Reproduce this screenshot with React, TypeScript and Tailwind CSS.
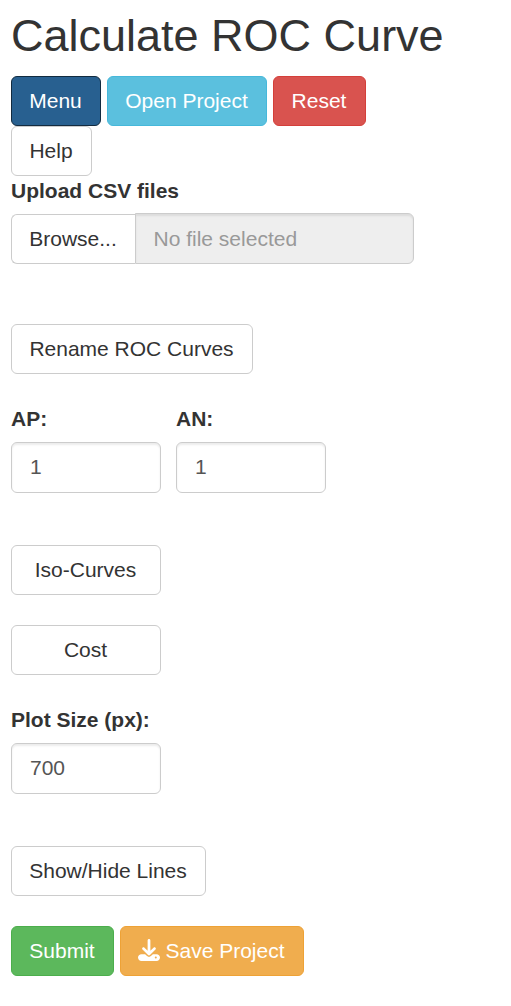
import React from "react";

const base =
  "flex h-[50px] items-center justify-center rounded-md border pr-px pb-[2px] text-[21px] leading-none whitespace-nowrap";
const plain = "bg-white border-[#ccc] text-[#333]";

function Button({ className, children }: { className: string; children: React.ReactNode }) {
  return <button className={`${base} ${className}`}>{children}</button>;
}

function NumberField({ label, value }: { label: string; value: string }) {
  return (
    <div className="w-[150px]">
      <label className="block h-[38px] whitespace-nowrap text-[21px] leading-[29px] font-bold">{label}</label>
      <input
        defaultValue={value}
        className="block h-[51px] w-full rounded-md border border-[#ccc] bg-white px-[18px] pb-0.5 text-[21px] text-[#555] shadow-[inset_0_2px_2px_rgba(0,0,0,0.075)] outline-none"
      />
    </div>
  );
}

function DownloadIcon() {
  return (
    <svg viewBox="0 0 512 512" className="mr-[5px] size-[22px] shrink-0" fill="currentColor">
      <path d="M288 32c0-17.700-14.300-32-32-32s-32 14.300-32 32v242.700l-73.400-73.400c-12.500-12.500-32.800-12.500-45.300 0s-12.500 32.800 0 45.300l128 128c12.500 12.500 32.800 12.500 45.300 0l128-128c12.500-12.500 12.500-32.800 0-45.300s-32.800-12.500-45.300 0L288 274.700V32z" />
      <path d="M80 352C36 352 0 388 0 432s36 80 80 80h352c44 0 80-36 80-80s-36-80-80-80h-85.500l-45.300 45.300c-25 25-65.500 25-90.500 0L165.500 352H80zm334 104a24 24 0 1 1 0-48 24 24 0 1 1 0 48z" />
    </svg>
  );
}

export default function App() {
  return (
    <main className="min-h-[1006px] bg-white pl-[11px] font-['Liberation_Sans',Arial,sans-serif] text-[#333]">
      <h1 className="h-[76px] pt-[11px] text-[45px] leading-[50px] font-normal whitespace-nowrap">Calculate ROC Curve</h1>
      <div className="flex gap-[6px]">
        <Button className="w-[90px] border-[#122b40] bg-[#286090] text-white">Menu</Button>
        <Button className="w-[160px] border-[#46b8da] bg-[#5bc0de] text-white">Open Project</Button>
        <Button className="w-[93px] border-[#d43f3a] bg-[#d9534f] text-white">Reset</Button>
      </div>
      <Button className={`w-[81px] ${plain}`}>Help</Button>
      <label className="block h-[37px] text-[21px] leading-[29px] font-bold">Upload CSV files</label>
      <div className="flex h-[51px] w-[403px] items-end">
        <button className="h-[50px] w-[124px] rounded-l-md border border-r-0 border-[#ccc] bg-white pr-px text-[21px] text-[#333]">
          Browse...
        </button>
        <input
          readOnly
          placeholder="No file selected"
          className="h-[51px] w-[279px] rounded-r-md border border-[#ccc] bg-[#eee] px-[17.5px] text-[21px] shadow-[inset_0_2px_2px_rgba(0,0,0,0.075)] outline-none placeholder:text-[#999]"
        />
      </div>
      <Button className={`mt-[60px] w-[242px] ${plain}`}>Rename ROC Curves</Button>
      <div className="mt-[30px] flex gap-[15px]">
        <NumberField label="AP:" value="1" />
        <NumberField label="AN:" value="1" />
      </div>
      <Button className={`mt-[52px] w-[150px] ${plain}`}>Iso-Curves</Button>
      <Button className={`mt-[30px] mb-[30px] w-[150px] ${plain}`}>Cost</Button>
      <NumberField label="Plot Size (px):" value="700" />
      <Button className={`mt-[52px] w-[195px] ${plain}`}>Show/Hide Lines</Button>
      <div className="mt-[30px] flex gap-[6px]">
        <Button className="w-[103px] border-[#4cae4c] bg-[#5cb85c] text-white">Submit</Button>
        <Button className="w-[184px] border-[#eea236] bg-[#f0ad4e] text-white">
          <DownloadIcon />
          Save Project
        </Button>
      </div>
    </main>
  );
}
